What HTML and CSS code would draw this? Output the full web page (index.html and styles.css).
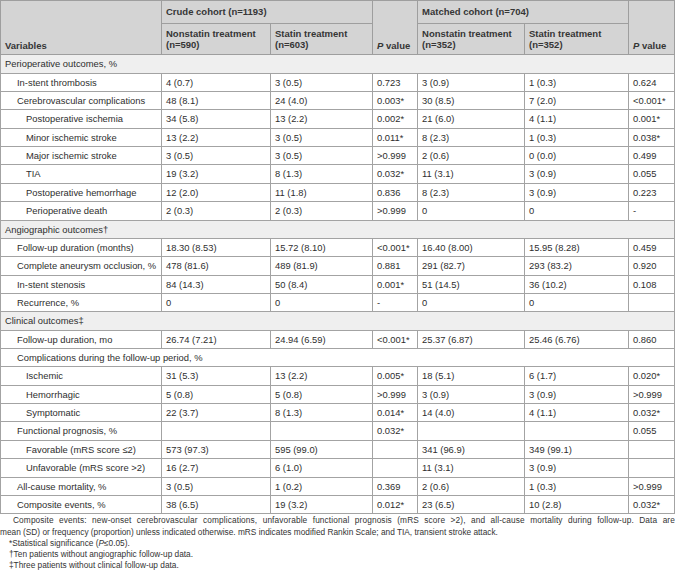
FILE: index.html
```html
<!DOCTYPE html>
<html>
<head>
<meta charset="utf-8">
<link rel="stylesheet" href="styles.css">
</head>
<body>
<table class="tbl">
  <colgroup>
    <col class="c-var"><col class="c-n1"><col class="c-s1"><col class="c-p1"><col class="c-n2"><col class="c-s2"><col class="c-p2">
  </colgroup>
  <thead>
    <tr class="h1">
      <th rowspan="2" class="bottom">Variables</th>
      <th colspan="2">Crude cohort (n=1193)</th>
      <th rowspan="2" class="bottom"><i>P</i> value</th>
      <th colspan="2">Matched cohort (n=704)</th>
      <th rowspan="2" class="bottom"><i>P</i> value</th>
    </tr>
    <tr class="h2">
      <th>Nonstatin treatment<br>(n=590)</th>
      <th>Statin treatment<br>(n=603)</th>
      <th>Nonstatin treatment<br>(n=352)</th>
      <th>Statin treatment<br>(n=352)</th>
    </tr>
  </thead>
  <tbody>
    <tr class="sec"><td colspan="7">Perioperative outcomes, %</td></tr>
    <tr><td class="l1">In-stent thrombosis</td><td>4 (0.7)</td><td>3 (0.5)</td><td>0.723</td><td>3 (0.9)</td><td>1 (0.3)</td><td>0.624</td></tr>
    <tr><td class="l1">Cerebrovascular complications</td><td>48 (8.1)</td><td>24 (4.0)</td><td>0.003*</td><td>30 (8.5)</td><td>7 (2.0)</td><td>&lt;0.001*</td></tr>
    <tr><td class="l2">Postoperative ischemia</td><td>34 (5.8)</td><td>13 (2.2)</td><td>0.002*</td><td>21 (6.0)</td><td>4 (1.1)</td><td>0.001*</td></tr>
    <tr><td class="l2">Minor ischemic stroke</td><td>13 (2.2)</td><td>3 (0.5)</td><td>0.011*</td><td>8 (2.3)</td><td>1 (0.3)</td><td>0.038*</td></tr>
    <tr><td class="l2">Major ischemic stroke</td><td>3 (0.5)</td><td>3 (0.5)</td><td>&gt;0.999</td><td>2 (0.6)</td><td>0 (0.0)</td><td>0.499</td></tr>
    <tr><td class="l2">TIA</td><td>19 (3.2)</td><td>8 (1.3)</td><td>0.032*</td><td>11 (3.1)</td><td>3 (0.9)</td><td>0.055</td></tr>
    <tr><td class="l2">Postoperative hemorrhage</td><td>12 (2.0)</td><td>11 (1.8)</td><td>0.836</td><td>8 (2.3)</td><td>3 (0.9)</td><td>0.223</td></tr>
    <tr><td class="l2">Perioperative death</td><td>2 (0.3)</td><td>2 (0.3)</td><td>&gt;0.999</td><td>0</td><td>0</td><td>-</td></tr>
    <tr class="sec"><td colspan="7">Angiographic outcomes†</td></tr>
    <tr><td class="l1">Follow-up duration (months)</td><td>18.30 (8.53)</td><td>15.72 (8.10)</td><td>&lt;0.001*</td><td>16.40 (8.00)</td><td>15.95 (8.28)</td><td>0.459</td></tr>
    <tr><td class="l1">Complete aneurysm occlusion, %</td><td>478 (81.6)</td><td>489 (81.9)</td><td>0.881</td><td>291 (82.7)</td><td>293 (83.2)</td><td>0.920</td></tr>
    <tr><td class="l1">In-stent stenosis</td><td>84 (14.3)</td><td>50 (8.4)</td><td>0.001*</td><td>51 (14.5)</td><td>36 (10.2)</td><td>0.108</td></tr>
    <tr><td class="l1">Recurrence, %</td><td>0</td><td>0</td><td>-</td><td>0</td><td>0</td><td></td></tr>
    <tr class="sec"><td colspan="7">Clinical outcomes‡</td></tr>
    <tr><td class="l1">Follow-up duration, mo</td><td>26.74 (7.21)</td><td>24.94 (6.59)</td><td>&lt;0.001*</td><td>25.37 (6.87)</td><td>25.46 (6.76)</td><td>0.860</td></tr>
    <tr><td class="l1" colspan="7">Complications during the follow-up period, %</td></tr>
    <tr><td class="l2">Ischemic</td><td>31 (5.3)</td><td>13 (2.2)</td><td>0.005*</td><td>18 (5.1)</td><td>6 (1.7)</td><td>0.020*</td></tr>
    <tr><td class="l2">Hemorrhagic</td><td>5 (0.8)</td><td>5 (0.8)</td><td>&gt;0.999</td><td>3 (0.9)</td><td>3 (0.9)</td><td>&gt;0.999</td></tr>
    <tr><td class="l2">Symptomatic</td><td>22 (3.7)</td><td>8 (1.3)</td><td>0.014*</td><td>14 (4.0)</td><td>4 (1.1)</td><td>0.032*</td></tr>
    <tr><td class="l1">Functional prognosis, %</td><td></td><td></td><td>0.032*</td><td></td><td></td><td>0.055</td></tr>
    <tr><td class="l2">Favorable (mRS score ≤2)</td><td>573 (97.3)</td><td>595 (99.0)</td><td></td><td>341 (96.9)</td><td>349 (99.1)</td><td></td></tr>
    <tr><td class="l2">Unfavorable (mRS score &gt;2)</td><td>16 (2.7)</td><td>6 (1.0)</td><td></td><td>11 (3.1)</td><td>3 (0.9)</td><td></td></tr>
    <tr><td class="l1">All-cause mortality, %</td><td>3 (0.5)</td><td>1 (0.2)</td><td>0.369</td><td>2 (0.6)</td><td>1 (0.3)</td><td>&gt;0.999</td></tr>
    <tr><td class="l1">Composite events, %</td><td>38 (6.5)</td><td>19 (3.2)</td><td>0.012*</td><td>23 (6.5)</td><td>10 (2.8)</td><td>0.032*</td></tr>
  </tbody>
</table>
<div class="notes">
  <p class="lead"><span class="first">Composite events: new-onset cerebrovascular complications, unfavorable functional prognosis (mRS score &gt;2), and all-cause mortality during follow-up. Data are</span><span class="rest">mean (SD) or frequency (proportion) unless indicated otherwise. mRS indicates modified Rankin Scale; and TIA, transient stroke attack.</span></p>
  <p class="fn">*Statistical significance (<i>P</i>≤0.05).</p>
  <p class="fn">†Ten patients without angiographic follow-up data.</p>
  <p class="fn">‡Three patients without clinical follow-up data.</p>
</div>
</body>
</html>
```
FILE: styles.css
```css
html, body {
  margin: 0;
  padding: 0;
  background: #ffffff;
}
body {
  font-family: "Liberation Sans", Arial, sans-serif;
  color: #2e2e2e;
}
.tbl {
  border-collapse: collapse;
  table-layout: fixed;
  width: 674px;
  font-size: 9.4px;
}
.c-var { width: 161px; }
.c-n1 { width: 109px; }
.c-s1 { width: 102px; }
.c-p1 { width: 45px; }
.c-n2 { width: 107px; }
.c-s2 { width: 104px; }
.c-p2 { width: 46px; }

.tbl th {
  background: #d4d4d4;
  border: 1px solid #9e9e9e;
  font-weight: 700;
  font-size: 9.5px;
  color: #363636;
  text-align: left;
  padding: 0 4px;
  line-height: 11.6px;
  vertical-align: middle;
}
.tbl .h1 th { height: 21.7px; }
.tbl .h2 th { height: 29.6px; padding-top: 1px; }
.tbl th.bottom { vertical-align: bottom; padding-bottom: 3px; }
.tbl th i { font-style: italic; }

.tbl td {
  border: 1px solid #a3a3a3;
  padding: 0 4px;
  height: 17.36px;
  line-height: 17.36px;
  white-space: nowrap;
  vertical-align: middle;
}
.tbl tr.sec td {
  background: #efefef;
}
.tbl td.l1 { padding-left: 16px; }
.tbl td.l2 { padding-left: 25px; }

.notes {
  width: 675px;
  font-size: 8.3px;
  line-height: 11.3px;
  color: #333;
  padding-top: 1px;
}
.notes p {
  margin: 0;
}
.notes .first {
  display: block;
  padding-left: 13px;
  text-align: justify;
  text-align-last: justify;
  letter-spacing: 0.12px;
  white-space: nowrap;
}
.notes .rest {
  display: block;
}
.notes .fn {
  padding-left: 9px;
}
```
